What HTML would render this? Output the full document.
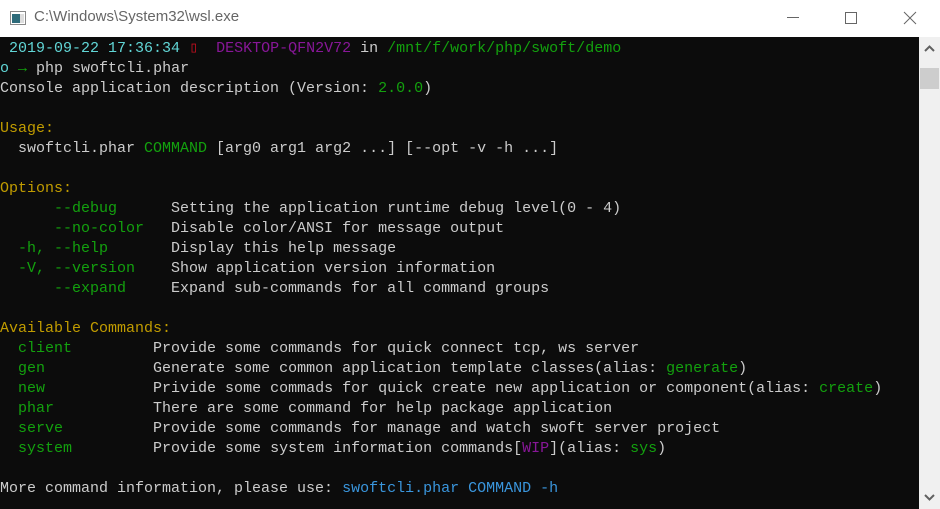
<!DOCTYPE html>
<html><head><meta charset="utf-8"><style>
html,body{margin:0;padding:0;width:940px;height:509px;overflow:hidden;background:#fff;}
#title{position:absolute;left:0;top:0;width:940px;height:37px;background:#fff;}
#title .t{position:absolute;left:34px;top:8px;font:15px "Liberation Sans",sans-serif;color:#666;}
#term{position:absolute;left:0;top:37px;width:919px;height:472px;background:#0c0c0c;}
#sb{position:absolute;left:919px;top:37px;width:21px;height:472px;background:#f0f0f0;}
pre{margin:0;position:absolute;left:0;top:2px;font:15px/20px "Liberation Mono",monospace;color:#cccccc;}
.c{color:#61d6d6}.p{color:#881798}.g{color:#13a10e}.y{color:#c19c00}.b{color:#3a96dd}.r{color:#c50f1f}
</style></head><body>
<div id="title">
<svg style="position:absolute;left:10px;top:11px" width="16" height="14"><rect x="0.5" y="0.5" width="15" height="13" fill="#fff" stroke="#888"/><rect x="2" y="3" width="8" height="9" fill="#2d6b7a"/><rect x="10" y="3" width="4" height="9" fill="#ddd"/></svg>
<div class="t">C:\Windows\System32\wsl.exe</div>
<div style="position:absolute;left:787px;top:17px;width:12px;height:1px;background:#666"></div>
<div style="position:absolute;left:845px;top:12px;width:10px;height:10px;border:1px solid #666"></div>
<svg style="position:absolute;left:903px;top:11px" width="14" height="14"><path d="M1 1L13 13M13 1L1 13" stroke="#666" stroke-width="1"/></svg>
</div>
<div id="term"><pre> <span class="c">2019-09-22 17:36:34</span> <span class="r">▯</span>  <span class="p">DESKTOP-QFN2V72</span> in <span class="g">/mnt/f/work/php/swoft/demo</span>
<span class="c">o</span> <span class="g">→</span> php swoftcli.phar
Console application description (Version: <span class="g">2.0.0</span>)

<span class="y">Usage:</span>
  swoftcli.phar <span class="g">COMMAND</span> [arg0 arg1 arg2 ...] [--opt -v -h ...]

<span class="y">Options:</span>
<span class="g">      --debug</span>      Setting the application runtime debug level(0 - 4)
<span class="g">      --no-color</span>   Disable color/ANSI for message output
<span class="g">  -h, --help</span>       Display this help message
<span class="g">  -V, --version</span>    Show application version information
<span class="g">      --expand</span>     Expand sub-commands for all command groups

<span class="y">Available Commands:</span>
  <span class="g">client</span>         Provide some commands for quick connect tcp, ws server
  <span class="g">gen</span>            Generate some common application template classes(alias: <span class="g">generate</span>)
  <span class="g">new</span>            Privide some commads for quick create new application or component(alias: <span class="g">create</span>)
  <span class="g">phar</span>           There are some command for help package application
  <span class="g">serve</span>          Provide some commands for manage and watch swoft server project
  <span class="g">system</span>         Provide some system information commands[<span class="p">WIP</span>](alias: <span class="g">sys</span>)

More command information, please use: <span class="b">swoftcli.phar COMMAND -h</span></pre></div>
<div id="sb">
<svg style="position:absolute;left:5px;top:8px" width="11" height="7"><path d="M1 6L5.5 1.5L10 6" stroke="#606060" stroke-width="2" fill="none"/></svg>
<div style="position:absolute;left:1px;top:31px;width:19px;height:21px;background:#cdcdcd"></div>
<svg style="position:absolute;left:5px;top:457px" width="11" height="7"><path d="M1 1L5.5 5.5L10 1" stroke="#606060" stroke-width="2" fill="none"/></svg>
</div>
</body></html>
